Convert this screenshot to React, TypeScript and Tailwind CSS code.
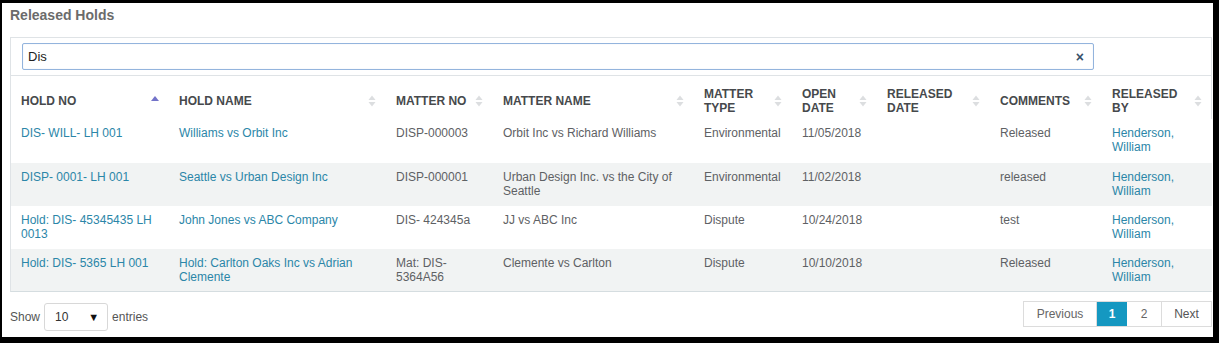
import React from 'react';

type Row = {
  holdNo: string;
  holdName: string;
  matterNo: string;
  matterName: string;
  matterType: string;
  openDate: string;
  releasedDate: string;
  comments: string;
  releasedBy: string;
  height: string;
};

const ROWS: Row[] = [
  {
    holdNo: 'DIS- WILL- LH 001',
    holdName: 'Williams vs Orbit Inc',
    matterNo: 'DISP-000003',
    matterName: 'Orbit Inc vs Richard Williams',
    matterType: 'Environmental',
    openDate: '11/05/2018',
    releasedDate: '',
    comments: 'Released',
    releasedBy: 'Henderson, William',
    height: 'h-[44px]',
  },
  {
    holdNo: 'DISP- 0001- LH 001',
    holdName: 'Seattle vs Urban Design Inc',
    matterNo: 'DISP-000001',
    matterName: 'Urban Design Inc. vs the City of Seattle',
    matterType: 'Environmental',
    openDate: '11/02/2018',
    releasedDate: '',
    comments: 'released',
    releasedBy: 'Henderson, William',
    height: 'h-[43px]',
  },
  {
    holdNo: 'Hold: DIS- 45345435 LH 0013',
    holdName: 'John Jones vs ABC Company',
    matterNo: 'DIS- 424345a',
    matterName: 'JJ vs ABC Inc',
    matterType: 'Dispute',
    openDate: '10/24/2018',
    releasedDate: '',
    comments: 'test',
    releasedBy: 'Henderson, William',
    height: 'h-[43px]',
  },
  {
    holdNo: 'Hold: DIS- 5365 LH 001',
    holdName: 'Hold: Carlton Oaks Inc vs Adrian Clemente',
    matterNo: 'Mat: DIS- 5364A56',
    matterName: 'Clemente vs Carlton',
    matterType: 'Dispute',
    openDate: '10/10/2018',
    releasedDate: '',
    comments: 'Released',
    releasedBy: 'Henderson, William',
    height: 'h-[42px]',
  },
];

const COLUMNS = [
  { label: 'HOLD NO', width: 158 },
  { label: 'HOLD NAME', width: 217 },
  { label: 'MATTER NO', width: 107 },
  { label: 'MATTER NAME', width: 201 },
  { label: 'MATTER TYPE', width: 98 },
  { label: 'OPEN DATE', width: 85 },
  { label: 'RELEASED DATE', width: 113 },
  { label: 'COMMENTS', width: 112 },
  { label: 'RELEASED BY', width: 110 },
];

function SortIcon({ active }: { active?: boolean }) {
  if (active) {
    return (
      <svg width="8" height="12" viewBox="0 0 8 12" className="shrink-0">
        <path d="M0 6 L4 1 L8 6 Z" fill="#7373c9" />
      </svg>
    );
  }
  return (
    <svg width="8" height="14" viewBox="0 0 8 14" className="shrink-0">
      <path d="M0.5 6 L4 1.5 L7.5 6 Z" fill="#dcdee0" />
      <path d="M0.5 8 L4 12.5 L7.5 8 Z" fill="#dcdee0" />
    </svg>
  );
}

export default function App() {
  return (
    <div className="w-[1219px] h-[343px] bg-black pt-[3px] pl-[2px] pr-[6px] pb-[6px] font-['Liberation_Sans',Arial,sans-serif]">
      <div className="h-full bg-white flex flex-col">
        {/* Title */}
        <div className="h-[26px] pl-[8px] pt-[4px] text-[14px] font-bold text-[#6b6b6b] leading-[16px]">
          Released Holds
        </div>

        {/* Panel */}
        <div className="ml-[8px] mr-[1px] mt-[8px] border border-[#dfe3e6] border-b-[#d5dde0]">
          <div className="h-[38px] pt-[5px] pl-[11px] border-b border-[#dfe3e6]">
            <div className="w-[1072px] h-[27px] border border-[#93b4dd] rounded-[2px] flex items-center pl-[5px] pr-[9px] shadow-[inset_0_0_1px_#c5d6ec]">
              <span className="flex-1 text-[13px] text-[#222]">Dis</span>
              <span className="text-[14px] font-bold text-[#37506b] leading-none">×</span>
            </div>
          </div>

          <table className="table-fixed border-collapse w-[1201px] text-[12px] leading-[14px]">
            <colgroup>
              {COLUMNS.map((c) => (
                <col key={c.label} style={{ width: c.width }} />
              ))}
            </colgroup>
            <thead>
              <tr className="h-[43px]">
                {COLUMNS.map((c, i) => (
                  <th key={c.label} className="px-[10px] pt-[6px] text-left align-middle font-bold text-[#46494c]">
                    <div className="flex items-center justify-between gap-[6px]">
                      <span className="leading-[14px]">{c.label}</span>
                      <SortIcon active={i === 0} />
                    </div>
                  </th>
                ))}
              </tr>
            </thead>
            <tbody>
              {ROWS.map((r, i) => (
                <tr key={r.holdNo} className={`${r.height} ${i % 2 === 1 ? 'bg-[#f1f3f3]' : 'bg-white'}`}>
                  <td className="px-[10px] pt-[7px] align-top text-[#2b86a8]">{r.holdNo}</td>
                  <td className="px-[10px] pt-[7px] align-top text-[#2b86a8]">{r.holdName}</td>
                  <td className="px-[10px] pt-[7px] align-top text-[#5e6164]">{r.matterNo}</td>
                  <td className="px-[10px] pt-[7px] align-top text-[#5e6164]">{r.matterName}</td>
                  <td className="px-[10px] pt-[7px] align-top text-[#5e6164]">{r.matterType}</td>
                  <td className="px-[10px] pt-[7px] align-top text-[#5e6164]">{r.openDate}</td>
                  <td className="px-[10px] pt-[7px] align-top text-[#5e6164]">{r.releasedDate}</td>
                  <td className="px-[10px] pt-[7px] align-top text-[#5e6164]">{r.comments}</td>
                  <td className="px-[10px] pt-[7px] align-top text-[#2b86a8]">{r.releasedBy}</td>
                </tr>
              ))}
            </tbody>
          </table>
        </div>

        {/* Footer */}
        <div className="flex items-start justify-between pl-[8px] mr-[1px] mt-[9px] text-[12px] text-[#555]">
          <div className="flex items-center gap-[4px] mt-[2px]">
            <span>Show</span>
            <div className="w-[64px] h-[28px] border border-[#d8d8d8] rounded-[3px] flex items-center justify-between pl-[10px] pr-[8px] text-[#333]">
              <span className="text-[12px]">10</span>
              <span className="text-[11px] text-[#111]">▼</span>
            </div>
            <span>entries</span>
          </div>
          <div className="flex h-[26px] border border-[#dcdcdc] text-[12px]">
            <div className="w-[73px] flex items-center justify-center text-[#666] border-r border-[#dcdcdc]">Previous</div>
            <div className="w-[30px] flex items-center justify-center bg-[#1598c1] text-white font-bold">1</div>
            <div className="w-[35px] flex items-center justify-center text-[#666] border-r border-[#dcdcdc]">2</div>
            <div className="w-[49px] flex items-center justify-center text-[#555]">Next</div>
          </div>
        </div>
      </div>
    </div>
  );
}
